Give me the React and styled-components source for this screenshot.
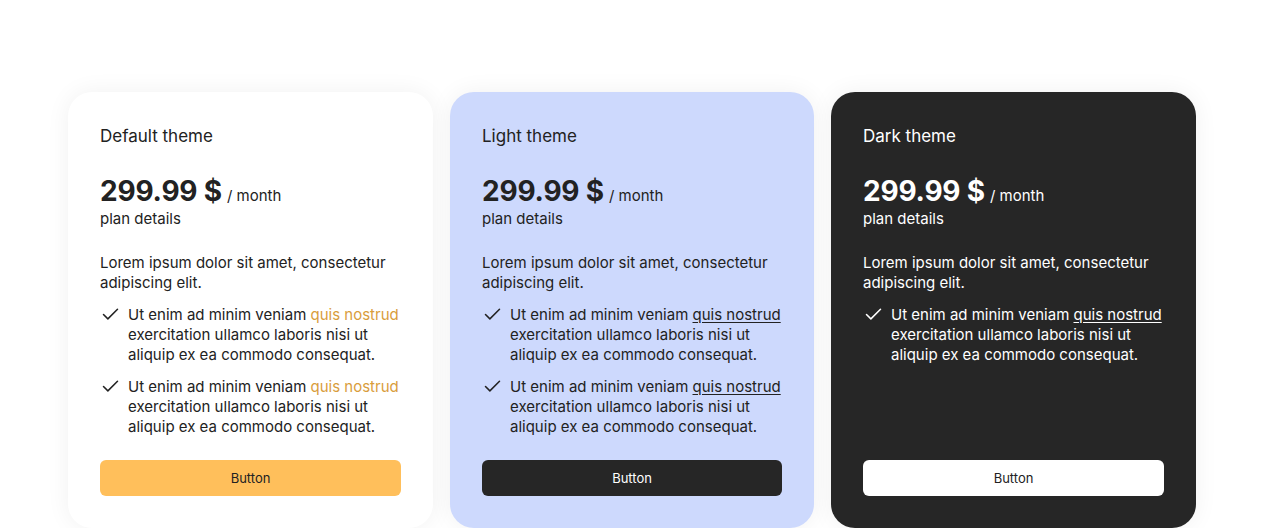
import React from "react";
import styled, { createGlobalStyle } from "styled-components";
import { Check } from "lucide-react";

const themes = {
  default: {
    bg: "#ffffff",
    text: "#222222",
    link: "#d99d3c",
    underline: false,
    btnBg: "#ffbf5b",
    btnText: "#222222",
  },
  light: {
    bg: "#cdd9fd",
    text: "#222222",
    link: "#222222",
    underline: true,
    btnBg: "#262626",
    btnText: "#ffffff",
  },
  dark: {
    bg: "#262626",
    text: "#ffffff",
    link: "#ffffff",
    underline: true,
    btnBg: "#ffffff",
    btnText: "#222222",
  },
};

const GlobalStyle = createGlobalStyle`
  * { box-sizing: border-box; }
  body {
    margin: 0;
    background: #ffffff;
    font-family: Inter, "Noto Sans", sans-serif;
  }
`;

const Page = styled.main`
  display: flex;
  justify-content: center;
  gap: 17px;
  padding-top: 92px;
`;

const Card = styled.section`
  width: ${({ $w }) => $w}px;
  height: 436px;
  padding: 32px;
  border-radius: 24px;
  display: flex;
  flex-direction: column;
  background: ${({ $t }) => $t.bg};
  color: ${({ $t }) => $t.text};
  box-shadow: 0 0 24px rgba(0, 0, 0, 0.06);
`;

const Title = styled.h2`
  margin: 0;
  font-size: 17px;
  line-height: 24px;
  font-weight: 400;
`;

const PriceRow = styled.div`
  margin-top: 25px;
  display: flex;
  align-items: baseline;
  gap: 5px;
  height: 36px;
  line-height: 36px;
`;

const Amount = styled.span`
  font-size: 28px;
  font-weight: 700;
  letter-spacing: -0.2px;
`;

const Period = styled.span`
  font-size: 15px;
`;

const Details = styled.div`
  font-size: 15px;
  line-height: 20px;
`;

const Description = styled.p`
  margin: 24px 0 0;
  font-size: 15px;
  line-height: 20px;
`;

const Features = styled.ul`
  list-style: none;
  margin: 12px 0 0;
  padding: 0;
  display: flex;
  flex-direction: column;
  gap: 12px;
`;

const Feature = styled.li`
  display: flex;
  gap: 7px;
  font-size: 15px;
  line-height: 20px;

  svg {
    flex: none;
    margin-top: -1px;
  }
`;

const Link = styled.a`
  color: ${({ $t }) => $t.link};
  text-decoration: ${({ $t }) => ($t.underline ? "underline" : "none")};
  text-underline-offset: 2px;
  text-decoration-thickness: 1px;
`;

const Button = styled.button`
  margin-top: auto;
  height: 36px;
  width: 100%;
  border: none;
  border-radius: 6px;
  font-family: inherit;
  font-size: 13px;
  font-weight: 400;
  background: ${({ $t }) => $t.btnBg};
  color: ${({ $t }) => $t.btnText};
`;

const plans = [
  { key: "default", title: "Default theme", items: 2, width: 365 },
  { key: "light", title: "Light theme", items: 2, width: 364 },
  { key: "dark", title: "Dark theme", items: 1, width: 365 },
];

export default function App() {
  return (
    <>
      <GlobalStyle />
      <Page>
        {plans.map((p) => {
          const t = themes[p.key];
          return (
            <Card key={p.key} $t={t} $w={p.width}>
              <Title>{p.title}</Title>
              <PriceRow>
                <Amount>299.99 $</Amount>
                <Period>/ month</Period>
              </PriceRow>
              <Details>plan details</Details>
              <Description>
                Lorem ipsum dolor sit amet, consectetur adipiscing elit.
              </Description>
              <Features>
                {Array.from({ length: p.items }).map((_, i) => (
                  <Feature key={i}>
                    <Check size={21} strokeWidth={1.75} />
                    <span>
                      Ut enim ad minim veniam <Link $t={t}>quis nostrud</Link>{" "}
                      exercitation ullamco laboris nisi ut aliquip ex ea
                      commodo consequat.
                    </span>
                  </Feature>
                ))}
              </Features>
              <Button $t={t}>Button</Button>
            </Card>
          );
        })}
      </Page>
    </>
  );
}
